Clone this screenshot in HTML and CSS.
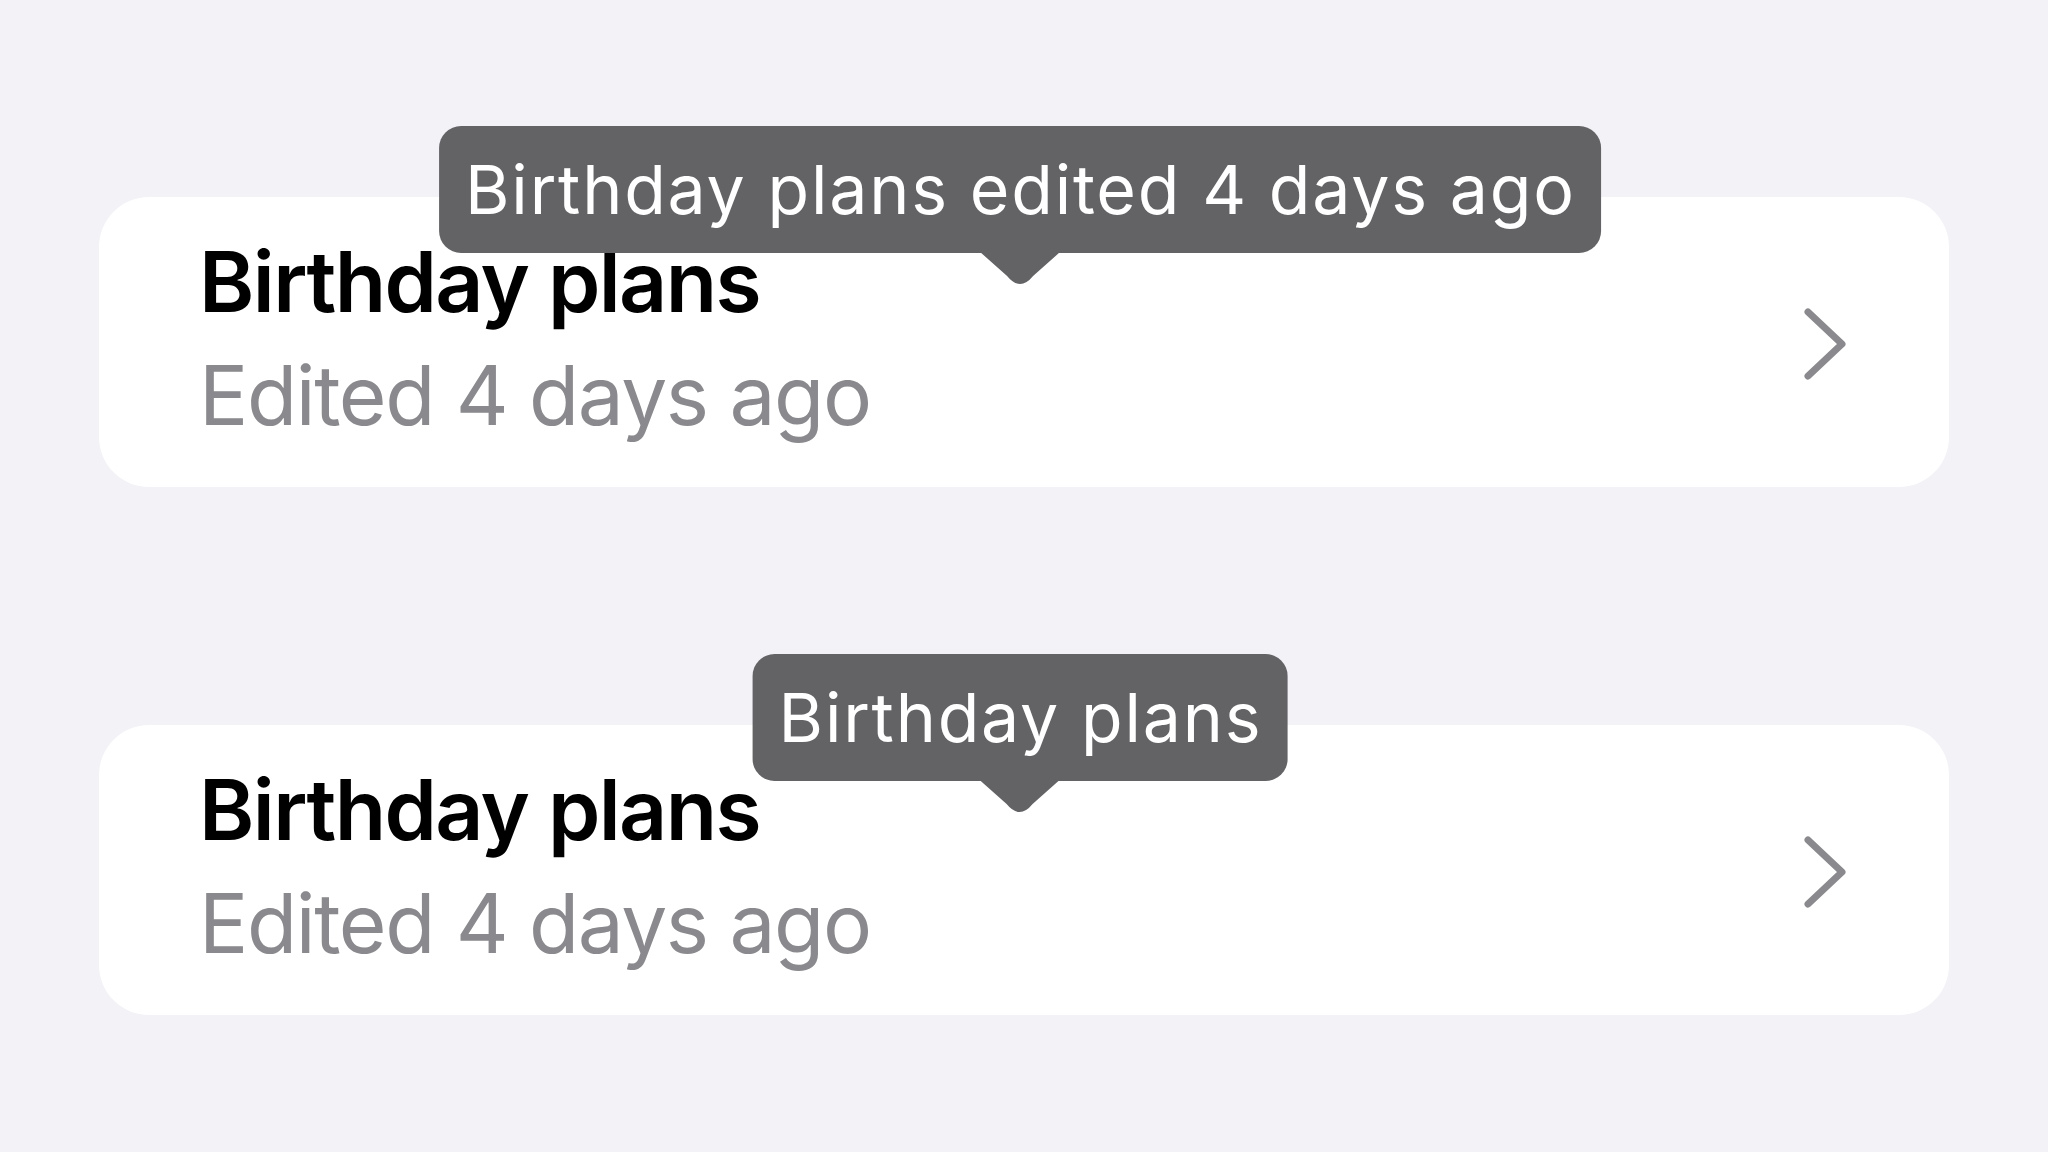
FILE: index.html
```html
<!DOCTYPE html>
<html lang="en">
<head>
<meta charset="utf-8">
<title>Notes list</title>
<link rel="stylesheet" href="styles.css">
</head>
<body>
<main class="list">
  <div class="card">
    <div class="text">
      <div class="title">Birthday plans</div>
      <div class="subtitle">Edited 4 days ago</div>
    </div>
    <svg class="chevron" width="50" height="76" viewBox="0 0 50 76" aria-hidden="true">
      <path d="M9 6 L43 38 L9 70" fill="none" stroke="#8a8a8e" stroke-width="7" stroke-linecap="round" stroke-linejoin="round"/>
    </svg>
    <div class="tooltip">
      <span class="tip-text">Birthday plans edited 4 days ago</span>
      <svg class="tip-arrow" width="80" height="38" viewBox="0 0 80 38" aria-hidden="true">
        <path d="M0 0 L27 24 Q40 40 53 24 L80 0 Z" fill="#636366"/>
      </svg>
    </div>
  </div>
  <div class="card">
    <div class="text">
      <div class="title">Birthday plans</div>
      <div class="subtitle">Edited 4 days ago</div>
    </div>
    <svg class="chevron" width="50" height="76" viewBox="0 0 50 76" aria-hidden="true">
      <path d="M9 6 L43 38 L9 70" fill="none" stroke="#8a8a8e" stroke-width="7" stroke-linecap="round" stroke-linejoin="round"/>
    </svg>
    <div class="tooltip">
      <span class="tip-text">Birthday plans</span>
      <svg class="tip-arrow" width="80" height="38" viewBox="0 0 80 38" aria-hidden="true">
        <path d="M0 0 L27 24 Q40 40 53 24 L80 0 Z" fill="#636366"/>
      </svg>
    </div>
  </div>
</main>
</body>
</html>
```
FILE: styles.css
```css
html, body {
  margin: 0;
  padding: 0;
  background: #f2f2f7;
  font-family: Inter, "Noto Sans", "Liberation Sans", sans-serif;
}

.list {
  display: flex;
  flex-direction: column;
  gap: 238px;
  padding: 197px 99px 0 99px;
}

.card {
  position: relative;
  display: flex;
  align-items: flex-start;
  justify-content: space-between;
  height: 290px;
  background: #ffffff;
  border-radius: 50px;
}

.text {
  display: flex;
  flex-direction: column;
  padding: 43px 0 0 100px;
}

.title {
  font-size: 84px;
  line-height: 84px;
  font-weight: 600;
  color: #000000;
  letter-spacing: -1.6px;
}

.subtitle {
  margin-top: 31px;
  font-size: 82px;
  line-height: 82px;
  font-weight: 400;
  color: #8a8a8e;
  letter-spacing: -1.4px;
}

.chevron {
  align-self: center;
  margin-right: 100px;
  margin-top: 4px;
}

.tooltip {
  position: absolute;
  top: -71px;
  left: 50%;
  margin-left: -4px;
  transform: translateX(-50%);
  height: 127px;
  display: flex;
  align-items: center;
  padding: 0 25px 0 26px;
  background: #636366;
  border-radius: 22px;
}

.tip-text {
  font-size: 68px;
  line-height: 127px;
  color: #ffffff;
  white-space: nowrap;
  letter-spacing: 1.8px;
}

.tip-arrow {
  position: absolute;
  left: 50%;
  top: 126px;
  transform: translateX(-50%);
}
```
